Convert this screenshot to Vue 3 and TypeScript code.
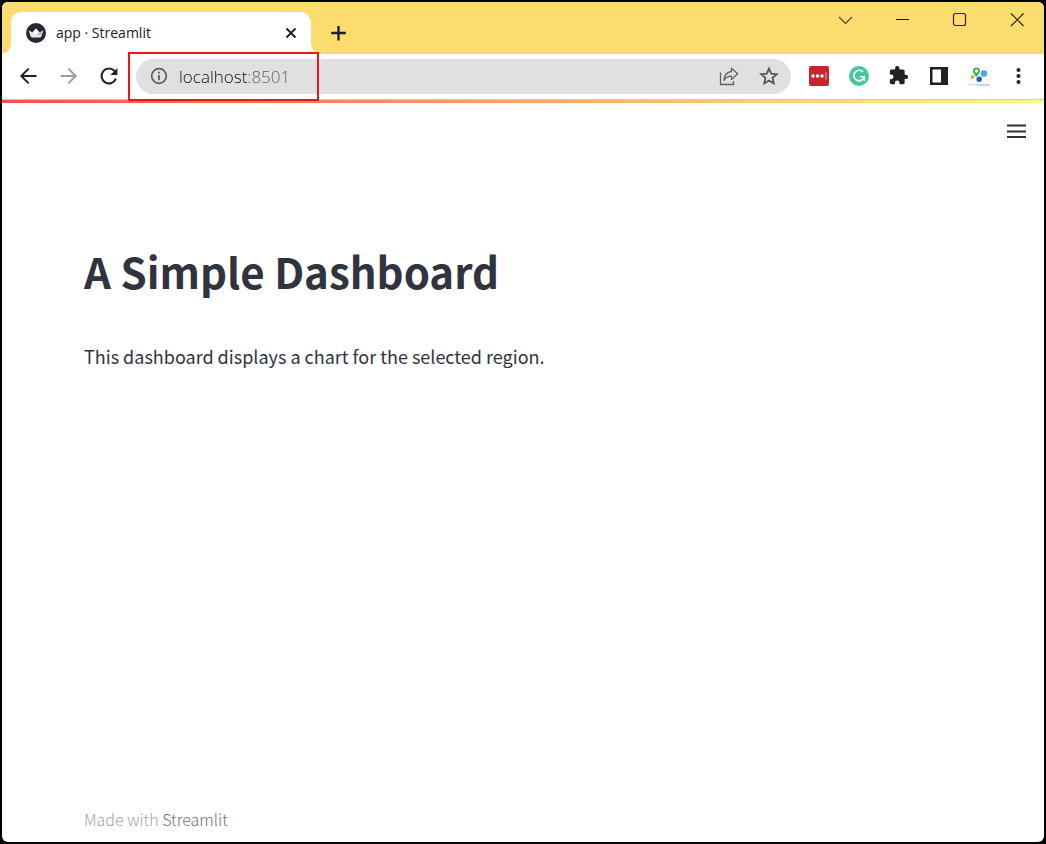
<script setup lang="ts">
import { ref } from 'vue'

const address = ref('localhost:8501')
</script>

<template>
  <div class="desktop">
    <div class="window">
      <header class="tab-strip">
        <div class="tab">
          <svg class="favicon" width="20" height="20" viewBox="0 0 20 20" aria-hidden="true">
            <circle cx="10" cy="10" r="10" fill="#262730" />
            <path d="M2.6 7.2 6.5 9.4 10 5.4l3.5 4 4-2.2-2.2 6.3q-.4 1-1.4 1H6.1q-1 0-1.4-1z" fill="#e8e8ea" />
            <path d="M10 5.4l3.5 4-3.5 3-3.5-3z" fill="#fff" />
            <path d="M17.5 7.2l-4 2.2-3.5 3 5.2-.6z" fill="#b9b9bd" />
          </svg>
          <span class="tab-title">app · Streamlit</span>
          <button class="icon-button tab-close" type="button" aria-label="Close tab">
            <svg width="12" height="12" viewBox="0 0 12 12"><path d="M1.5 1.5l9 9m0-9l-9 9" stroke="#202124" stroke-width="1.9" /></svg>
          </button>
        </div>
        <button class="icon-button new-tab" type="button" aria-label="New tab">
          <svg width="16" height="16" viewBox="0 0 16 16"><path d="M8.5 1v14.500M1.200 8h14.600" stroke="#202124" stroke-width="2.4" /></svg>
        </button>
        <div class="window-controls">
          <button class="icon-button" type="button" aria-label="Search tabs">
            <svg width="16" height="16" viewBox="0 0 16 16"><path d="M2 5l6.5 6.5L15 5" fill="none" stroke="#4a421f" stroke-width="1.100" /></svg>
          </button>
          <button class="icon-button" type="button" aria-label="Minimize">
            <svg width="16" height="16" viewBox="0 0 16 16"><path d="M2 7.500h13" stroke="#111" /></svg>
          </button>
          <button class="icon-button" type="button" aria-label="Maximize">
            <svg width="16" height="16" viewBox="0 0 16 16"><rect x="2.500" y="1.500" width="12" height="12" rx="2" fill="none" stroke="#2b260f" stroke-width="1.200" /></svg>
          </button>
          <button class="icon-button" type="button" aria-label="Close">
            <svg width="16" height="16" viewBox="0 0 16 16"><path d="M3 1.500l12.500 12.500m0-12.500L3 14" stroke="#2b260f" stroke-width="1.200" /></svg>
          </button>
        </div>
      </header>

      <nav class="toolbar" aria-label="Browser toolbar">
        <button class="icon-button" type="button" aria-label="Back">
          <svg width="20" height="20" viewBox="0 0 20 20"><path d="M17.500 10H3M9.700 2.600L2.300 10l7.400 7.400" fill="none" stroke="#202124" stroke-width="2" /></svg>
        </button>
        <button class="icon-button" type="button" aria-label="Forward">
          <svg width="20" height="20" viewBox="0 0 20 20"><path d="M1.700 10H16.500M9.300 2.600l7.400 7.400-7.400 7.400" fill="none" stroke="#9b9c9e" stroke-width="2" /></svg>
        </button>
        <button class="icon-button" type="button" aria-label="Reload">
          <svg width="20" height="20" viewBox="0 0 20 20">
            <path d="M16.900 12.600A7.400 7.400 0 1 1 15.600 5.100" fill="none" stroke="#202124" stroke-width="2.100" />
            <path d="M18.400 1.900v7h-7z" fill="#202124" />
          </svg>
        </button>

        <form class="omnibox" @submit.prevent>
          <button class="icon-button site-info" type="button" aria-label="View site information">
            <svg width="18" height="18" viewBox="0 0 18 18">
              <circle cx="9" cy="9" r="7.300" fill="none" stroke="#5a5d61" stroke-width="1.700" />
              <path d="M9 8v5.200M9 4.700v1.800" stroke="#5a5d61" stroke-width="1.800" />
            </svg>
          </button>
          <input v-model="address" class="address" type="text" aria-label="Address" spellcheck="false" />
          <button class="icon-button" type="button" aria-label="Share this page">
            <svg width="20" height="20" viewBox="0 0 20 20">
              <path d="M1.500 6.500v12h13v-3.500" fill="none" stroke="#5f6062" stroke-width="1.300" />
              <path d="M12.500 2.200l6.200 5.600-6.200 5.600v-3.200c-4 0-6 1.300-7.600 4.200.4-5 3-8.300 7.600-8.900z" fill="none" stroke="#5f6062" stroke-width="1.300" stroke-linejoin="round" />
            </svg>
          </button>
          <button class="icon-button" type="button" aria-label="Bookmark this page">
            <svg width="20" height="20" viewBox="0 0 20 20"><path d="M10 2.600l2.200 5.100 5.600.5-4.200 3.700 1.200 5.500L10 14.500l-4.800 2.900 1.200-5.500-4.200-3.700 5.600-.5z" fill="none" stroke="#55575a" stroke-width="1.800" /></svg>
          </button>
          <span class="highlight" aria-hidden="true"></span>
        </form>

        <div class="extensions">
          <button class="icon-button" type="button" aria-label="Password manager">
            <svg width="22" height="22" viewBox="0 0 22 22">
              <rect x="1" y="1" width="20" height="20" rx="2" fill="#c9252c" />
              <circle cx="5" cy="11" r="1.700" fill="#fff" /><circle cx="9.500" cy="11" r="1.700" fill="#fff" /><circle cx="14" cy="11" r="1.700" fill="#fff" />
              <path d="M18 7.500v7" stroke="#f2b8ba" />
            </svg>
          </button>
          <button class="icon-button" type="button" aria-label="Writing assistant">
            <svg width="22" height="22" viewBox="0 0 22 22">
              <circle cx="11" cy="11" r="10" fill="#46c6a0" />
              <path d="M15 7A5.300 5.300 0 1 0 16.200 11.900" fill="none" stroke="#fff" stroke-width="1.700" />
              <path d="M11.700 11.700h4.600v4" fill="none" stroke="#fff" stroke-width="1.500" />
            </svg>
          </button>
          <button class="icon-button" type="button" aria-label="Extensions">
            <svg width="20" height="20" viewBox="1 1 23 23"><path d="M20.500 11H19V7c0-1.100-.9-2-2-2h-4V3.500a2.500 2.500 0 0 0-5 0V5H4c-1.100 0-2 .9-2 2v3.800h1.500a2.700 2.700 0 0 1 0 5.400H2V20c0 1.100.9 2 2 2h3.800v-1.500a2.700 2.700 0 0 1 5.400 0V22H17c1.100 0 2-.9 2-2v-4h1.500a2.500 2.500 0 0 0 0-5z" fill="#202124" /></svg>
          </button>
          <button class="icon-button" type="button" aria-label="Side panel">
            <svg width="20" height="20" viewBox="0 0 20 20"><path d="M1 1h18v18H1zM3.500 3.500v13H12v-13z" fill="#202124" fill-rule="evenodd" /></svg>
          </button>
          <button class="icon-button" type="button" aria-label="Profile">
            <svg width="26" height="26" viewBox="0 0 26 26">
              <circle cx="13" cy="13" r="12" fill="#fafafa" />
              <path d="M10.300 14.200C8.500 11.500 7 10 7 8a3.500 3.500 0 0 1 7 0c0 2-1.700 3.500-3.700 6.200z" fill="#45ad4c" />
              <circle cx="10.500" cy="8" r="1.700" fill="#fff" />
              <circle cx="18" cy="10.500" r="3.300" fill="#41aaf0" />
              <circle cx="6.500" cy="14" r="2" fill="#a2ca48" />
              <circle cx="13.200" cy="16.300" r="2.700" fill="#2858bd" />
              <path d="M1.500 21.500h10" stroke="#bfe2c4" stroke-width="1.500" stroke-dasharray="2 .5" />
              <path d="M11.500 22h12.500" stroke="#a9d7e2" stroke-width="2" stroke-dasharray="2 .5" />
            </svg>
          </button>
          <button class="icon-button" type="button" aria-label="Browser menu">
            <svg width="20" height="20" viewBox="0 0 20 20" fill="#202124"><circle cx="9.500" cy="4" r="2" /><circle cx="9.500" cy="10" r="2" /><circle cx="9.500" cy="16" r="2" /></svg>
          </button>
        </div>
      </nav>

      <div class="app">
        <div class="decoration"></div>
        <div class="app-header">
          <button class="icon-button app-menu" type="button" aria-label="Main menu">
            <svg width="20" height="16" viewBox="0 0 20 16"><path d="M0 2.500h19M0 8.500h19M0 14h19" stroke="#31333f" stroke-width="2" /></svg>
          </button>
        </div>
        <main class="content">
          <h1>A Simple Dashboard</h1>
          <p>This dashboard displays a chart for the selected region.</p>
        </main>
        <footer class="app-footer">Made with <a href="#">Streamlit</a></footer>
      </div>
    </div>
  </div>
</template>

<style>
body {
  margin: 0;
  background: #000;
}
</style>

<style scoped>
* {
  box-sizing: border-box;
}

.desktop {
  display: flex;
  min-height: 100vh;
  padding: 2px;
  background: #000;
  font-family: "Open Sans", "Noto Sans", sans-serif;
}

.window {
  display: flex;
  flex: 1;
  flex-direction: column;
  min-width: 0;
  overflow: hidden;
  border-radius: 6px;
  background: #fff;
}

.icon-button {
  display: flex;
  flex: none;
  align-items: center;
  justify-content: center;
  width: 40px;
  height: 36px;
  padding: 0;
  border: 0;
  background: none;
}

.tab-strip {
  display: flex;
  align-items: flex-end;
  height: 52px;
  padding-left: 9px;
  background: #fbdc6e;
}

.tab {
  position: relative;
  display: flex;
  flex: 0 1 300px;
  align-items: center;
  height: 42px;
  padding: 0 8px 0 15px;
  border-radius: 10px 10px 0 0;
  background: #fff;
}

.tab::before,
.tab::after {
  position: absolute;
  bottom: 0;
  width: 9px;
  height: 9px;
  content: "";
}

.tab::before {
  right: 100%;
  background: radial-gradient(circle at 0 0, #fbdc6e 8px, #fff 9px);
}

.tab::after {
  left: 100%;
  background: radial-gradient(circle at 100% 0, #fbdc6e 8px, #fff 9px);
}

.favicon {
  flex: none;
}

.tab-title {
  flex: 1;
  overflow: hidden;
  margin-left: 10px;
  color: #202124;
  font-size: 14px;
  line-height: 20px;
  white-space: nowrap;
}

.tab-close {
  width: 24px;
}

.new-tab {
  height: 42px;
  margin-left: 7px;
}

.window-controls {
  display: flex;
  align-self: flex-start;
  margin-left: auto;
}

.window-controls .icon-button {
  width: 57px;
}

.toolbar {
  display: flex;
  align-items: center;
  height: 46px;
  padding: 0 5px 1px 7px;
  border-bottom: 1px solid #ccc;
}

.omnibox {
  position: relative;
  display: flex;
  flex: 1;
  align-items: center;
  min-width: 0;
  height: 35px;
  margin: 1px 8px 0 7px;
  padding: 0 2px 0 12px;
  border-radius: 18px;
  background: #e0e0e0;
}

.omnibox .icon-button {
  margin-bottom: 1px;
}

.omnibox .site-info {
  width: 22px;
}

.address {
  flex: 1;
  min-width: 0;
  height: 30px;
  margin-left: 9px;
  padding: 0;
  border: 0;
  outline: 0;
  background: linear-gradient(90deg, #101113 69px, #55575a 69px);
  background-clip: text;
  color: transparent;
  font: 300 17px/30px "Open Sans", "Noto Sans", sans-serif;
}

.highlight {
  position: absolute;
  top: -7px;
  left: -8px;
  width: 191px;
  height: 49px;
  border: 2px solid #f01414;
  pointer-events: none;
}

.extensions {
  display: flex;
}

.app {
  display: flex;
  flex: 1;
  flex-direction: column;
  color: #31333f;
  font-family: "Noto Sans CJK SC", "Noto Sans", sans-serif;
}

.decoration {
  height: 3px;
  background: linear-gradient(90deg, #f84c50, #fffb80);
}

.app-header {
  display: flex;
  justify-content: flex-end;
  padding: 10px 7px;
}

.content {
  flex: 1;
  padding: 79px 82px 0;
}

h1 {
  margin: 0;
  font-size: 42px;
  font-weight: 700;
  line-height: 66px;
}

p {
  margin: 36px 0 0;
  font-size: 18px;
  line-height: 32px;
}

.app-footer {
  padding: 0 82px 9px;
  color: #a3a3aa;
  font-size: 16px;
  font-weight: 300;
  line-height: 28px;
}

.app-footer a {
  color: #70717a;
  text-decoration: none;
}
</style>
